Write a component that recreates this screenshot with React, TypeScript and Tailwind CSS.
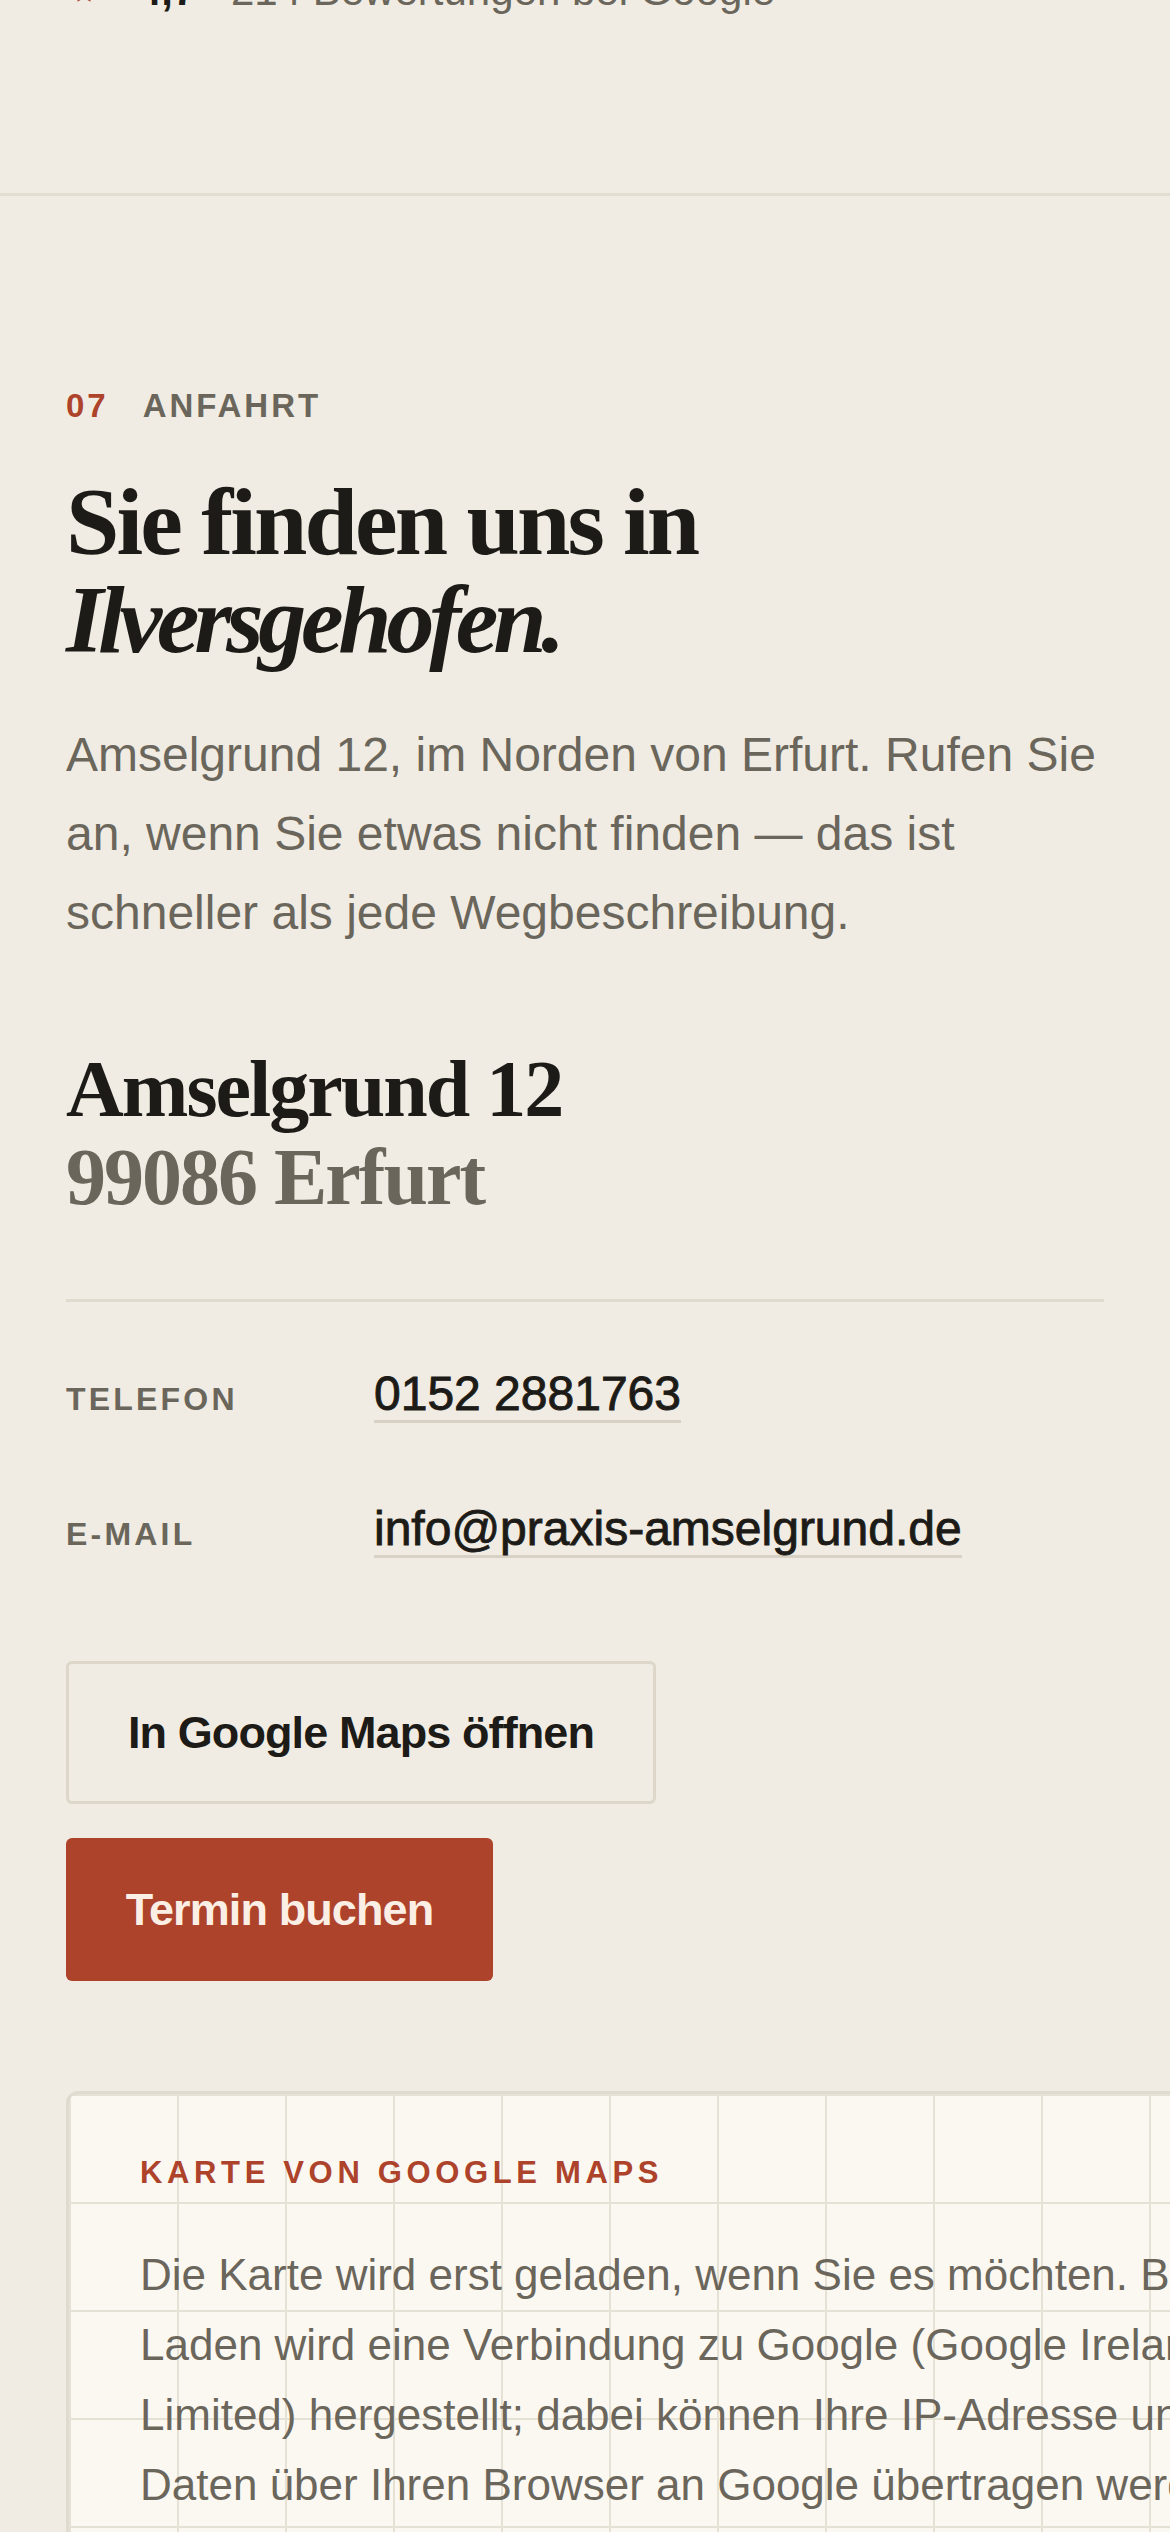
import { Fragment } from "react";

const contacts = [
  { label: "Telefon", value: "0152 2881763", href: "tel:015228817630" },
  { label: "E-Mail", value: "info@praxis-amselgrund.de", href: "mailto:info@praxis-amselgrund.de" },
] as const;

export default function App() {
  return (
    <div className="min-h-screen overflow-x-hidden bg-[#f0ece3] font-['Liberation_Sans',Arial,sans-serif] text-[#1d1b17]">
      {/* tail of the reviews block above */}
      <div className="flex h-[193px] flex-col px-[66px]">
        <div className="-mt-[30px] flex items-baseline text-[42px] leading-none">
          <svg viewBox="0 0 24 24" aria-hidden="true" className="ml-[5px] h-[26px] w-[26px] fill-[#ae432b]">
            <path d="M12 2l3.09 6.26L22 9.27l-5 4.87 1.18 6.88L12 17.77l-6.18 3.25L7 14.14 2 9.27l6.91-1.01L12 2z" />
          </svg>
          <span className="ml-[41px] inline-block w-[93px] font-bold">4,7</span>
          <span className="text-[#6b665b]">214 Bewertungen bei Google</span>
        </div>
      </div>

      <section id="anfahrt" className="border-t-[3px] border-[#e3ded2] px-[66px] pt-[193px] pb-[160px]">
        <p className="flex gap-[34px] text-[33px] font-bold leading-none tracking-[0.09em]">
          <span className="text-[#ae432b]">07</span>
          <span className="text-[#6b665b]">ANFAHRT</span>
        </p>

        <h2 className="mt-[51px] font-['Liberation_Serif',serif] text-[96px] font-bold leading-[98px] tracking-[-0.03em]">
          Sie finden uns in
          <br />
          <em className="tracking-[-0.055em]">Ilversgehofen.</em>
        </h2>

        <p className="mt-[46px] text-[48px] leading-[79px] text-[#6b665b]">
          Amselgrund 12, im Norden von Erfurt. Rufen Sie an, wenn Sie etwas nicht finden — das ist schneller als jede
          Wegbeschreibung.
        </p>

        <address className="mt-[93px] font-['Liberation_Serif',serif] text-[80px] font-bold not-italic leading-[88px] tracking-[-0.025em]">
          <span className="block">Amselgrund 12</span>
          <span className="block text-[#6b665b]">99086 Erfurt</span>
        </address>

        <dl className="mt-[78px] grid grid-cols-[308px_1fr] items-baseline gap-y-[63px] border-t-[3px] border-[#e0dbcf] pt-[56px]">
          {contacts.map((item) => (
            <Fragment key={item.label}>
              <dt className="text-[32px] font-bold uppercase leading-none tracking-[0.1em] text-[#6b665b]">{item.label}</dt>
              <dd className="text-[48px] leading-[72px] [-webkit-text-stroke:0.9px_#1d1b17]">
                <a href={item.href} className="border-b-[3px] border-[#d7d2c5]">
                  {item.value}
                </a>
              </dd>
            </Fragment>
          ))}
        </dl>

        <div className="mt-[96px] flex flex-col items-start gap-[34px]">
          <a
            href="#karte"
            className="flex h-[143px] w-[590px] items-center justify-center rounded-[6px] border-[3px] border-[#dcd7c9] text-[45px] font-bold tracking-[-0.02em]"
          >
            In Google Maps öffnen
          </a>
          <a
            href="#termin"
            className="flex h-[143px] w-[427px] items-center justify-center rounded-[6px] bg-[#ae432b] text-[45px] font-bold tracking-[-0.02em] text-[#fbefe5]"
          >
            Termin buchen
          </a>
        </div>

        <div
          id="karte"
          className="mt-[110px] w-[1300px] rounded-[12px] border-[3px] border-[#e0dbcf] bg-[#fbf8f2] px-[71px] pt-[63px] pb-[90px] [background-image:linear-gradient(to_right,#e6e1d5_2px,transparent_2px),linear-gradient(to_bottom,#e6e1d5_2px,transparent_2px)] [background-size:108px_108px]"
        >
          <p className="text-[31px] font-bold uppercase leading-none tracking-[0.15em] text-[#ae432b]">Karte von Google Maps</p>
          <p className="mt-[52px] text-[44px] leading-[70px] text-[#6b665b]">
            Die Karte wird erst geladen, wenn Sie es möchten. Beim Laden wird eine Verbindung zu Google (Google Ireland
            Limited) hergestellt; dabei können Ihre IP-Adresse und Daten über Ihren Browser an Google übertragen werden.
          </p>
          <button className="mt-[48px] h-[130px] rounded-[6px] bg-[#1d1b17] px-[60px] text-[45px] font-bold text-[#f0ece3]">
            Karte laden
          </button>
        </div>
      </section>
    </div>
  );
}
